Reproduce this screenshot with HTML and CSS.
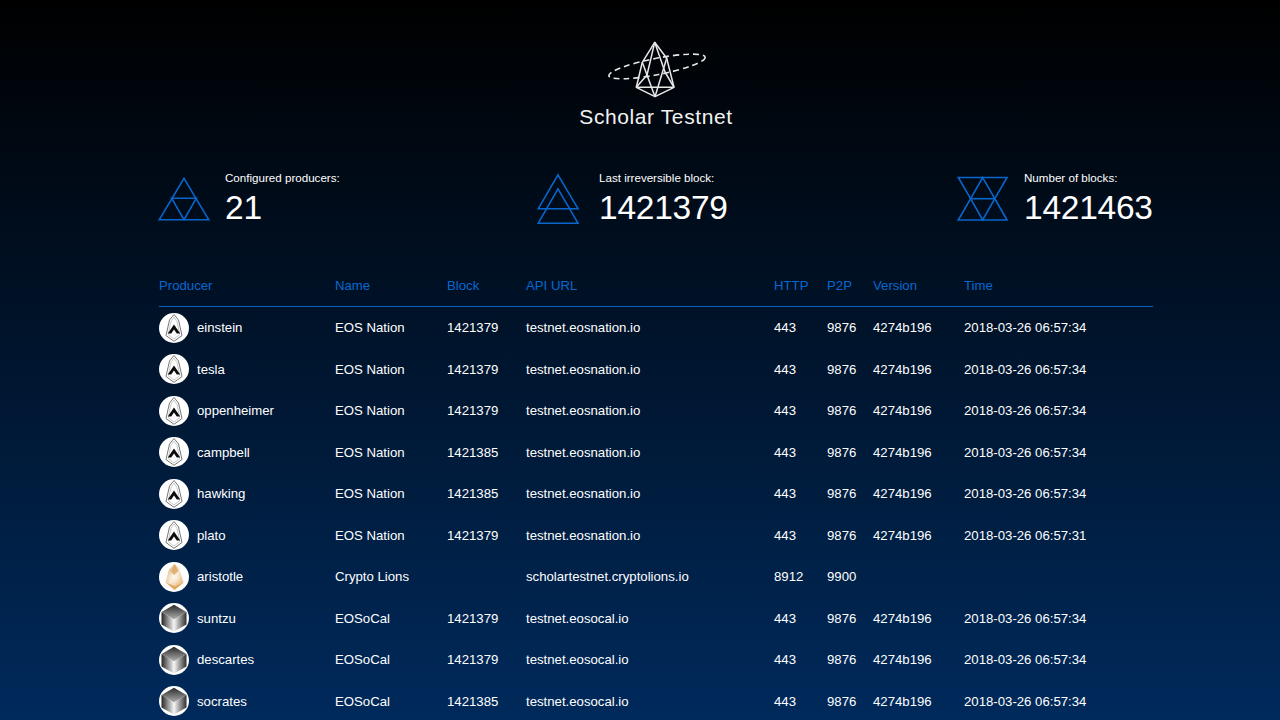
FILE: index.html
```html
<!DOCTYPE html>
<html lang="en">
<head>
<meta charset="utf-8">
<title>Scholar Testnet</title>
<link rel="stylesheet" href="styles.css">
</head>
<body>
<svg class="defs" width="0" height="0" aria-hidden="true">
  <defs>
    <linearGradient id="gemOrange" x1="0" y1="0" x2="1" y2="1">
      <stop offset="0" stop-color="#dba65f"/>
      <stop offset="0.5" stop-color="#f7e8d4"/>
      <stop offset="1" stop-color="#e6ac60"/>
    </linearGradient>
    <radialGradient id="gemCentre">
      <stop offset="0" stop-color="#fdf6ea"/>
      <stop offset="1" stop-color="#fbf1e2" stop-opacity="0"/>
    </radialGradient>
    <linearGradient id="cubeTop" x1="0" y1="0" x2="0" y2="1">
      <stop offset="0" stop-color="#2a2a2a"/>
      <stop offset="1" stop-color="#b0b0b0"/>
    </linearGradient>
    <linearGradient id="cubeLeft" x1="0" y1="0" x2="1" y2="0">
      <stop offset="0" stop-color="#262626"/>
      <stop offset="1" stop-color="#f6f6f6"/>
    </linearGradient>
    <linearGradient id="cubeRight" x1="0" y1="0" x2="1" y2="0">
      <stop offset="0" stop-color="#f6f6f6"/>
      <stop offset="1" stop-color="#303030"/>
    </linearGradient>
    <symbol id="av-nation" viewBox="0 0 30 30">
      <circle cx="15" cy="15" r="15" fill="#fff"/>
      <path d="M15 1.5 19.5 7 23 22.5 15 28.3 7 22.5 10.5 7Z" fill="#fff" stroke="#777" stroke-width="1"/>
      <path d="M15 4 18 8.5 20.8 21.5 15 26 9.2 21.5 12 8.5Z" fill="none" stroke="#bbb" stroke-width="0.8"/>
      <path d="M8.8 20.5 15 11.5 21.2 20.5H17.8L15 16.5 12.2 20.5Z" fill="#0c0c0c"/>
    </symbol>
    <symbol id="av-lions" viewBox="0 0 30 30">
      <circle cx="15" cy="15" r="15" fill="#fff"/>
      <path d="M15.5 2 20.5 6.5 24.5 20.5 15.5 28 6.5 20.5 10 7.5Z" fill="url(#gemOrange)"/>
      <circle cx="15" cy="15" r="7" fill="url(#gemCentre)"/>
      <path d="M15.5 2 12 9.5 15 13 19.5 9Z" fill="#d9a05a" opacity="0.75"/>
      <path d="M6.5 20.5 15.5 28 24.5 20.5 16 24Z" fill="#dd9c48" opacity="0.75"/>
    </symbol>
    <symbol id="av-socal" viewBox="0 0 30 30">
      <circle cx="15" cy="15" r="15" fill="#fff"/>
      <path d="M15 1.8 27.5 9 15 16.5 2.5 9Z" fill="url(#cubeTop)"/>
      <path d="M2.5 9 15 16.5V28.6L2.5 21.6Z" fill="url(#cubeLeft)"/>
      <path d="M27.5 9 15 16.5V28.6L27.5 21.6Z" fill="url(#cubeRight)"/>
    </symbol>
  </defs>
</svg>

<main class="page">
  <header class="brand">
    <svg class="brand-logo" width="100" height="58" viewBox="607 41 100 58" aria-hidden="true">
      <g class="logo-gem">
        <path d="M655.7 42.3 667.7 58.3 675 87.3 656 96.7 637.3 87.3 643.3 62.3Z"/>
        <path d="M637.3 87.3H675"/>
        <path d="M655.7 42.3 648 75 637.3 87.3"/>
        <path d="M655.7 42.3 666 72 675 87.3"/>
        <path d="M643.3 62.3 656 96.7"/>
        <path d="M667.7 58.3 656 96.7"/>
      </g>
      <ellipse class="logo-orbit" cx="658" cy="66.5" rx="49" ry="8.2" transform="rotate(-11 658 66.5)"/>
    </svg>
    <h1 class="brand-title">Scholar Testnet</h1>
  </header>

  <section class="stats">
    <div class="stat">
      <svg class="stat-icon" width="50" height="44" viewBox="159 177 50 44" aria-hidden="true">
        <path d="M184 178.3 208.7 219.7H159.3Z"/>
        <path d="M171.7 198.3H196.3L184 219.7Z"/>
      </svg>
      <div class="stat-text">
        <div class="stat-label">Configured producers:</div>
        <div class="stat-value">21</div>
      </div>
    </div>
    <div class="stat">
      <svg class="stat-icon stat-icon-narrow" width="42" height="50" viewBox="536 174 42 50" aria-hidden="true">
        <path d="M557 174.8 577 208.7H537.3Z"/>
        <path d="M557 188.8 577 223.2H537.3Z"/>
      </svg>
      <div class="stat-text">
        <div class="stat-label">Last irreversible block:</div>
        <div class="stat-value">1421379</div>
      </div>
    </div>
    <div class="stat">
      <svg class="stat-icon" width="50" height="44" viewBox="958 177 50 44" aria-hidden="true">
        <path d="M958.3 177.5H1007L994.8 198.7 1007 220H958.3L970.6 198.7Z"/>
        <path d="M970.6 198.7H994.8"/>
        <path d="M982.7 177.5 970.6 198.7 982.7 220 994.8 198.7Z"/>
      </svg>
      <div class="stat-text">
        <div class="stat-label">Number of blocks:</div>
        <div class="stat-value">1421463</div>
      </div>
    </div>
  </section>

  <table class="producers">
    <colgroup>
      <col class="c-producer"><col class="c-name"><col class="c-block"><col class="c-url">
      <col class="c-http"><col class="c-p2p"><col class="c-version"><col class="c-time">
    </colgroup>
    <thead>
      <tr><th>Producer</th><th>Name</th><th>Block</th><th>API URL</th><th>HTTP</th><th>P2P</th><th>Version</th><th>Time</th></tr>
    </thead>
    <tbody>
      <tr><td><div class="who"><svg class="avatar"><use href="#av-nation"/></svg>einstein</div></td><td>EOS Nation</td><td>1421379</td><td>testnet.eosnation.io</td><td>443</td><td>9876</td><td>4274b196</td><td>2018-03-26 06:57:34</td></tr>
      <tr><td><div class="who"><svg class="avatar"><use href="#av-nation"/></svg>tesla</div></td><td>EOS Nation</td><td>1421379</td><td>testnet.eosnation.io</td><td>443</td><td>9876</td><td>4274b196</td><td>2018-03-26 06:57:34</td></tr>
      <tr><td><div class="who"><svg class="avatar"><use href="#av-nation"/></svg>oppenheimer</div></td><td>EOS Nation</td><td>1421379</td><td>testnet.eosnation.io</td><td>443</td><td>9876</td><td>4274b196</td><td>2018-03-26 06:57:34</td></tr>
      <tr><td><div class="who"><svg class="avatar"><use href="#av-nation"/></svg>campbell</div></td><td>EOS Nation</td><td>1421385</td><td>testnet.eosnation.io</td><td>443</td><td>9876</td><td>4274b196</td><td>2018-03-26 06:57:34</td></tr>
      <tr><td><div class="who"><svg class="avatar"><use href="#av-nation"/></svg>hawking</div></td><td>EOS Nation</td><td>1421385</td><td>testnet.eosnation.io</td><td>443</td><td>9876</td><td>4274b196</td><td>2018-03-26 06:57:34</td></tr>
      <tr><td><div class="who"><svg class="avatar"><use href="#av-nation"/></svg>plato</div></td><td>EOS Nation</td><td>1421379</td><td>testnet.eosnation.io</td><td>443</td><td>9876</td><td>4274b196</td><td>2018-03-26 06:57:31</td></tr>
      <tr><td><div class="who"><svg class="avatar"><use href="#av-lions"/></svg>aristotle</div></td><td>Crypto Lions</td><td></td><td>scholartestnet.cryptolions.io</td><td>8912</td><td>9900</td><td></td><td></td></tr>
      <tr><td><div class="who"><svg class="avatar"><use href="#av-socal"/></svg>suntzu</div></td><td>EOSoCal</td><td>1421379</td><td>testnet.eosocal.io</td><td>443</td><td>9876</td><td>4274b196</td><td>2018-03-26 06:57:34</td></tr>
      <tr><td><div class="who"><svg class="avatar"><use href="#av-socal"/></svg>descartes</div></td><td>EOSoCal</td><td>1421379</td><td>testnet.eosocal.io</td><td>443</td><td>9876</td><td>4274b196</td><td>2018-03-26 06:57:34</td></tr>
      <tr><td><div class="who"><svg class="avatar"><use href="#av-socal"/></svg>socrates</div></td><td>EOSoCal</td><td>1421385</td><td>testnet.eosocal.io</td><td>443</td><td>9876</td><td>4274b196</td><td>2018-03-26 06:57:34</td></tr>
    </tbody>
  </table>
</main>
</body>
</html>
```
FILE: styles.css
```css
* { box-sizing: border-box; }

html, body {
  margin: 0;
  height: 100%;
  overflow: hidden;
}

body {
  background: linear-gradient(180deg, #000 0%, #002a5c 100%);
  color: #fff;
  font-family: "Liberation Sans", Arial, sans-serif;
  font-size: 13.2px;
}

.defs { position: absolute; }

.page {
  width: 994px;
  margin-left: 159px;
  padding-top: 41px;
}

.brand {
  display: flex;
  flex-direction: column;
  align-items: center;
}

.brand-logo { display: block; }

.logo-gem path {
  fill: none;
  stroke: #e8e8e8;
  stroke-width: 1.5;
  stroke-linejoin: round;
}

.logo-orbit {
  fill: none;
  stroke: #e8e8e8;
  stroke-width: 1.6;
  stroke-dasharray: 6 4;
}

.brand-title {
  margin: 6px 0 0;
  font-size: 21px;
  line-height: 24px;
  font-weight: 400;
  letter-spacing: 0.6px;
  color: #f2f2f2;
}

.stats {
  display: grid;
  grid-template-columns: 378px 421px 195px;
  margin-top: 42px;
}

.stat { display: flex; align-items: flex-start; }

.stat-icon {
  flex: none;
  margin: 6px 16px 0 0;
  overflow: visible;
}

.stat-icon-narrow { margin: 3px 20px 0 0; }

.stat-icon path {
  fill: none;
  stroke: #0866cc;
  stroke-width: 1.6;
}

.stat-label {
  font-size: 11.6px;
  line-height: 14px;
}

.stat-value {
  font-size: 33.5px;
  letter-spacing: -0.25px;
  line-height: 40px;
  margin-top: 3px;
}

.producers {
  width: 994px;
  margin-top: 34px;
  border-collapse: separate;
  border-spacing: 0;
  table-layout: fixed;
}

.c-producer { width: 176px; }
.c-name { width: 112px; }
.c-block { width: 79px; }
.c-url { width: 248px; }
.c-http { width: 53px; }
.c-p2p { width: 46px; }
.c-version { width: 91px; }
.c-time { width: 189px; }

.producers th {
  height: 45px;
  padding: 2px 0 0;
  text-align: left;
  font-weight: 400;
  color: #0868d0;
  border-bottom: 1px solid #0a62c0;
}

.producers td {
  height: 41.5px;
  padding: 0;
  white-space: nowrap;
}

.who {
  display: flex;
  align-items: center;
  gap: 8px;
}

.avatar {
  width: 30px;
  height: 30px;
  flex: none;
}
```
